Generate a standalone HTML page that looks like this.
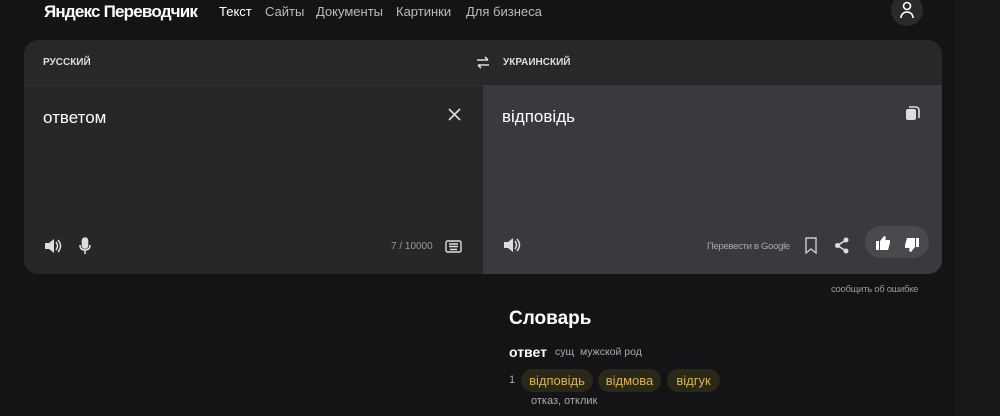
<!DOCTYPE html>
<html><head><meta charset="utf-8"><style>
*{margin:0;padding:0;box-sizing:border-box}
body{width:1000px;height:416px;background:#141416;font-family:"Liberation Sans",sans-serif;color:#fff;position:relative;overflow:hidden}
.side{position:absolute;left:955px;top:0;width:45px;height:416px;background:#19191b}
.a{position:absolute;white-space:nowrap}
.card{position:absolute;left:24px;top:40px;width:918px;height:234px;border-radius:14px;overflow:hidden;background:#28282b}
.lp{position:absolute;left:0;top:45px;width:459px;height:189px;background:#27272a;border-top:1px solid #333336}
.rp{position:absolute;left:459px;top:45px;width:459px;height:189px;background:#3a393d}
.chip{position:absolute;top:369px;height:23px;border-radius:12px;background:#2a2818;color:#d8b63e;font-size:13px;line-height:23px;text-align:center}
</style></head><body>
<div class="side"></div>
<div class="a" style="left:44px;top:2px;font-size:17px;font-weight:bold;letter-spacing:-0.8px">Яндекс Переводчик</div>
<div class="a" style="left:219px;top:4px;font-size:13px;color:#fff">Текст</div>
<div class="a" style="left:265px;top:4px;font-size:13px;color:#bbb">Сайты</div>
<div class="a" style="left:316px;top:4px;font-size:13px;color:#bbb">Документы</div>
<div class="a" style="left:396px;top:4px;font-size:13px;color:#bbb">Картинки</div>
<div class="a" style="left:466px;top:4px;font-size:13px;color:#bbb">Для бизнеса</div>
<div class="a" style="left:891px;top:-6px;width:32px;height:32px;border-radius:16px;background:#2a2a2d"></div>
<svg class="a" style="left:899px;top:1px" width="16" height="18" viewBox="0 0 16 18" fill="none" stroke="#fff" stroke-width="1.6"><circle cx="8" cy="5" r="3.5"/><path d="M2 17c0-4 3-6 6-6s6 2 6 6"/></svg>
<div class="card">
<div class="a" style="left:19px;top:17px;font-size:10px;font-weight:bold;color:#ddd">РУССКИЙ</div>
<svg class="a" style="left:452px;top:16px" width="14" height="13" viewBox="0 0 14 13" fill="none" stroke="#ddd" stroke-width="1.6"><path d="M1 4h11M9 1l3 3M13 9H2M5 12L2 9"/></svg>
<div class="a" style="left:479px;top:17px;font-size:10px;font-weight:bold;color:#ddd">УКРАИНСКИЙ</div>
<div class="lp">
<div class="a" style="left:19px;top:22px;font-size:17px">ответом</div>
<svg class="a" style="left:424px;top:22px" width="13" height="13" stroke="#ddd" stroke-width="1.6"><path d="M1 1l11 11M12 1L1 12"/></svg>
<svg class="a" style="left:20px;top:152px" width="18" height="16" viewBox="0 0 18 16" fill="#ddd"><path d="M1 5h4l5-4v14l-5-4H1z"/><path d="M12 4q3 4 0 8M14 2q5 6 0 12" stroke="#ddd" stroke-width="1.5" fill="none"/></svg>
<svg class="a" style="left:55px;top:151px" width="12" height="18" viewBox="0 0 12 18" fill="none" stroke="#ddd" stroke-width="1.6"><rect x="3.5" y="1" width="5" height="10" rx="2.5" fill="#ddd"/><path d="M1 8q0 5 5 5t5-5M6 13v4"/></svg>
<div class="a" style="left:367px;top:155px;font-size:10px;color:#999">7 / 10000</div>
<svg class="a" style="left:421px;top:154px" width="17" height="13" fill="none" stroke="#ddd" stroke-width="1.4"><rect x="1" y="1" width="15" height="11" rx="1.5"/><path d="M4 4h9M4 6.5h9M5 9.5h7"/></svg>
</div>
<div class="rp">
<div class="a" style="left:19px;top:22px;font-size:17px">відповідь</div>
<svg class="a" style="left:422px;top:20px" width="15" height="16" fill="#ddd"><rect x="1" y="4" width="10" height="11" rx="2"/><path d="M4 2h7a3 3 0 0 1 3 3v8" stroke="#ddd" stroke-width="1.6" fill="none"/></svg>
<svg class="a" style="left:20px;top:152px" width="18" height="16" viewBox="0 0 18 16" fill="#ddd"><path d="M1 5h4l5-4v14l-5-4H1z"/><path d="M12 4q3 4 0 8M14 2q5 6 0 12" stroke="#ddd" stroke-width="1.5" fill="none"/></svg>
<div class="a" style="left:224px;top:156px;font-size:9.5px;color:#aaa;letter-spacing:-0.3px">Перевести в Google</div>
<svg class="a" style="left:322px;top:152px" width="12" height="17" fill="none" stroke="#ccc" stroke-width="1.4"><path d="M1 1h10v15l-5-4-5 4z"/></svg>
<svg class="a" style="left:351px;top:152px" width="16" height="17" fill="#ddd"><circle cx="12" cy="3" r="2.5"/><circle cx="3.5" cy="8.5" r="2.5"/><circle cx="12" cy="14" r="2.5"/><path d="M12 3L3.5 8.5 12 14" stroke="#ddd" stroke-width="1.6" fill="none"/></svg>
<div class="a" style="left:382px;top:141px;width:64px;height:32px;border-radius:16px;background:#4a494d"></div>
<svg class="a" style="left:392px;top:150px" width="16" height="16" fill="#fff"><rect x="1" y="6" width="3" height="9"/><path d="M5 6l4-5c2 0 2 2 1.5 4H15v3l-2 7H5z"/></svg>
<svg class="a" style="left:421px;top:152px" width="16" height="16" fill="#fff"><rect x="12" y="1" width="3" height="9"/><path d="M11 10l-4 5c-2 0-2-2-1.5-4H1V8l2-7h8z"/></svg>
</div>
</div>
<div class="a" style="left:831px;top:284px;font-size:9.5px;color:#999;letter-spacing:-0.3px">сообщить об ошибке</div>
<div class="a" style="left:509px;top:308px;font-size:19px;font-weight:bold">Словарь</div>
<div class="a" style="left:509px;top:344px;font-size:14px;font-weight:bold">ответ</div>
<div class="a" style="left:555px;top:346px;font-size:10.5px;color:#aaa">сущ&nbsp; мужской род</div>
<div class="a" style="left:509px;top:374px;font-size:11px;color:#aaa">1</div>
<div class="chip" style="left:521px;width:72px">відповідь</div>
<div class="chip" style="left:598px;width:63px">відмова</div>
<div class="chip" style="left:667px;width:53px">відгук</div>
<div class="a" style="left:531px;top:395px;font-size:11px;color:#aaa">отказ, отклик</div>
</body></html>
